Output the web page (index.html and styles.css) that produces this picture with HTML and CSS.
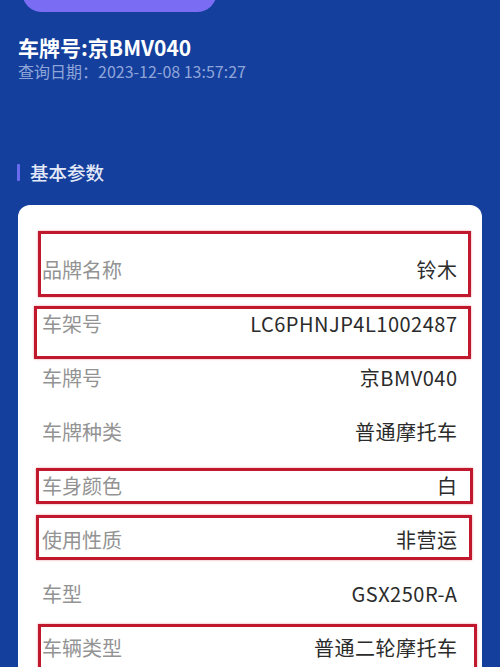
FILE: index.html
```html
<!DOCTYPE html>
<html lang="zh-CN">
<head>
<meta charset="utf-8">
<link rel="stylesheet" href="styles.css">
</head>
<body>
<div class="page">
  <div class="top-btn"><span>重新 查询 报告</span></div>
  <header class="head">
    <h1 class="title">车牌号:京BMV040</h1>
    <div class="date">查询日期：2023-12-08 13:57:27</div>
  </header>
  <h2 class="section">基本参数</h2>
  <section class="card">
    <div class="row"><span class="label">品牌名称</span><span class="value">铃木</span><i class="mark mark-1"></i></div>
    <div class="row"><span class="label">车架号</span><span class="value">LC6PHNJP4L1002487</span><i class="mark mark-2"></i></div>
    <div class="row"><span class="label">车牌号</span><span class="value">京BMV040</span></div>
    <div class="row"><span class="label">车牌种类</span><span class="value">普通摩托车</span></div>
    <div class="row"><span class="label">车身颜色</span><span class="value">白</span><i class="mark mark-5"></i></div>
    <div class="row"><span class="label">使用性质</span><span class="value">非营运</span><i class="mark mark-6"></i></div>
    <div class="row"><span class="label">车型</span><span class="value">GSX250R-A</span></div>
    <div class="row"><span class="label">车辆类型</span><span class="value">普通二轮摩托车</span><i class="mark mark-8"></i></div>
  </section>
</div>
</body>
</html>
```

FILE: styles.css
```css
* { box-sizing: border-box; }
html, body {
  margin: 0;
  padding: 0;
  background: #143f9d;
  height: 100%;
  overflow: hidden;
}
body {
  font-family: "Noto Sans CJK SC", "Noto Sans", sans-serif;
}
.page {
  padding: 0 18px;
}
.top-btn {
  margin: -28px 0 0 4px;
  width: 195px;
  height: 40px;
  border-radius: 20px;
  background: #7a6df4;
  display: flex;
  align-items: center;
  justify-content: center;
}
.top-btn span {
  color: #978cf7;
  font-size: 15px;
  position: relative;
  top: -10px;
  letter-spacing: 4px;
}
.head {
  padding-top: 22px;
}
.title {
  margin: 0;
  font-size: 21px;
  line-height: 26px;
  font-weight: 700;
  color: #ffffff;
}
.date {
  margin-top: 0;
  font-size: 16px;
  line-height: 22px;
  color: #8fa5d9;
}
.section {
  margin: 78px 0 0;
  font-size: 18.5px;
  line-height: 24px;
  font-weight: 500;
  color: #e3e9f7;
  display: flex;
  align-items: center;
  gap: 10px;
}
.section::before {
  content: "";
  width: 3px;
  height: 17px;
  background: #6a6cf0;
  border-radius: 1px;
  margin-left: -1px;
}
.card {
  margin-top: 21px;
  background: #ffffff;
  border-radius: 12px;
  padding: 37px 25px 0 24px;
  height: 520px;
}
.row {
  position: relative;
  height: 54px;
  display: flex;
  align-items: center;
  justify-content: space-between;
  font-size: 20px;
}
.label { color: #939393; }
.value { color: #2b2b2b; letter-spacing: 0.5px; margin-right: -0.5px; }
.mark {
  position: absolute;
  border: 3px solid #c0182c;
  box-shadow: 0 0 2px rgba(220, 40, 60, 0.5);
  pointer-events: none;
}
.mark-1 { top: -11px; left: -4px; width: 433px; height: 66px; }
.mark-2 { top: 10px; left: -8px; width: 437px; height: 53px; }
.mark-5 { top: 10px; left: -6px; width: 437px; height: 36px; }
.mark-6 { top: 3px; left: -6px; width: 436px; height: 45px; }
.mark-8 { top: 4px; left: -4px; width: 439px; height: 60px; }
```
